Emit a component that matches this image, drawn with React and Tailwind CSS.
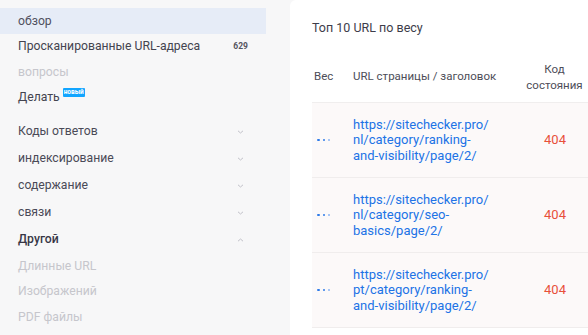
import React from 'react';

const Chevron = ({ up }) => (
  <svg width="7" height="4" viewBox="0 0 7 4" className="shrink-0">
    <path d={up ? 'M1 3.2 L3.5 1 L6 3.2' : 'M1 0.8 L3.5 3 L6 0.8'} fill="none" stroke="#c0c0c8" strokeWidth="1" />
  </svg>
);

const groups = ['Коды ответов', 'индексирование', 'содержание', 'связи'];
const subItems = ['Длинные URL', 'Изображений', 'PDF файлы'];

const rows = [
  ['https://sitechecker.pro/', 'nl/category/ranking-', 'and-visibility/page/2/'],
  ['https://sitechecker.pro/', 'nl/category/seo-', 'basics/page/2/'],
  ['https://sitechecker.pro/', 'pt/category/ranking-', 'and-visibility/page/2/'],
];

function Sidebar() {
  return (
    <div className="w-[290px] shrink-0 bg-[#f7f7f8] pt-[8px] pr-[24px] text-[12.2px]">
      <div className="h-[25.5px] flex items-center pl-[18px] bg-[#e6ecf7] text-[#50505e]">обзор</div>
      <div className="h-[25.5px] flex items-center pl-[18px] pr-[18px] justify-between text-[#44444f]">
        <span>Просканированные URL-адреса</span>
        <span className="text-[8.5px] font-bold text-[#55555f]">629</span>
      </div>
      <div className="h-[25.5px] flex items-center pl-[18px] text-[#c6c6cc]">вопросы</div>
      <div className="h-[25.5px] flex items-center pl-[18px] text-[#44444f]">
        <span>Делать</span>
        <span className="ml-[3px] -translate-y-[5px] whitespace-nowrap bg-[#12a5ff] text-white text-[6.5px] font-bold leading-[9px] px-[1px] rounded-[1px]">новый</span>
      </div>
      <div className="mt-[8px]">
        {groups.map((g) => (
          <div key={g} className="h-[27px] flex items-center justify-between pl-[18px] pr-[22px] text-[#4a4a57]">
            <span>{g}</span>
            <Chevron />
          </div>
        ))}
        <div className="h-[27px] flex items-center justify-between pl-[18px] pr-[22px] text-[#373746] font-medium">
          <span>Другой</span>
          <Chevron up />
        </div>
        {subItems.map((s) => (
          <div key={s} className="h-[25.5px] flex items-center pl-[18px] text-[#c6c6cc]">{s}</div>
        ))}
      </div>
    </div>
  );
}

function Dots() {
  return (
    <div className="flex items-center gap-[3px] pl-[5px]">
      <span className="w-[2.5px] h-[2.5px] rounded-full bg-[#2f7be8]" />
      <span className="w-[2.5px] h-[2.5px] rounded-full bg-[#2f7be8]" />
      <span className="w-[2px] h-[2px] rounded-full bg-[#8db5f2]" />
    </div>
  );
}

export default function App() {
  return (
    <div className="w-[588px] h-[335px] overflow-hidden flex bg-[#f7f7f8] font-['Roboto',sans-serif]">
      <Sidebar />
      <div className="flex-1 bg-white rounded-tl-[6px] pt-[19px] pl-[22px]">
        <h2 className="text-[12.5px] leading-[18px] text-[#3d3d4a] m-0 font-normal">Топ 10 URL по весу</h2>
        <div className="mt-[14px]">
          <div className="h-[52px] flex items-center border-b border-[#f0eeee] text-[11.5px] text-[#4d4d58]">
            <div className="w-[41px] pl-[2px]">Вес</div>
            <div className="w-[169px]">URL страницы / заголовок</div>
            <div className="flex-1 text-center leading-[16px] pr-[1px]">Код<br />состояния</div>
          </div>
          {rows.map((r, i) => (
            <div key={i} className="h-[75px] flex items-center bg-[#fcf9f9] border-b border-[#f0eded]">
              <div className="w-[41px]"><Dots /></div>
              <div className="w-[169px] text-[13px] leading-[15.5px] text-[#2173e6]">
                {r.map((l) => (<div key={l}>{l}</div>))}
              </div>
              <div className="flex-1 text-center text-[13px] text-[#e8503a]">404</div>
            </div>
          ))}
        </div>
      </div>
    </div>
  );
}
